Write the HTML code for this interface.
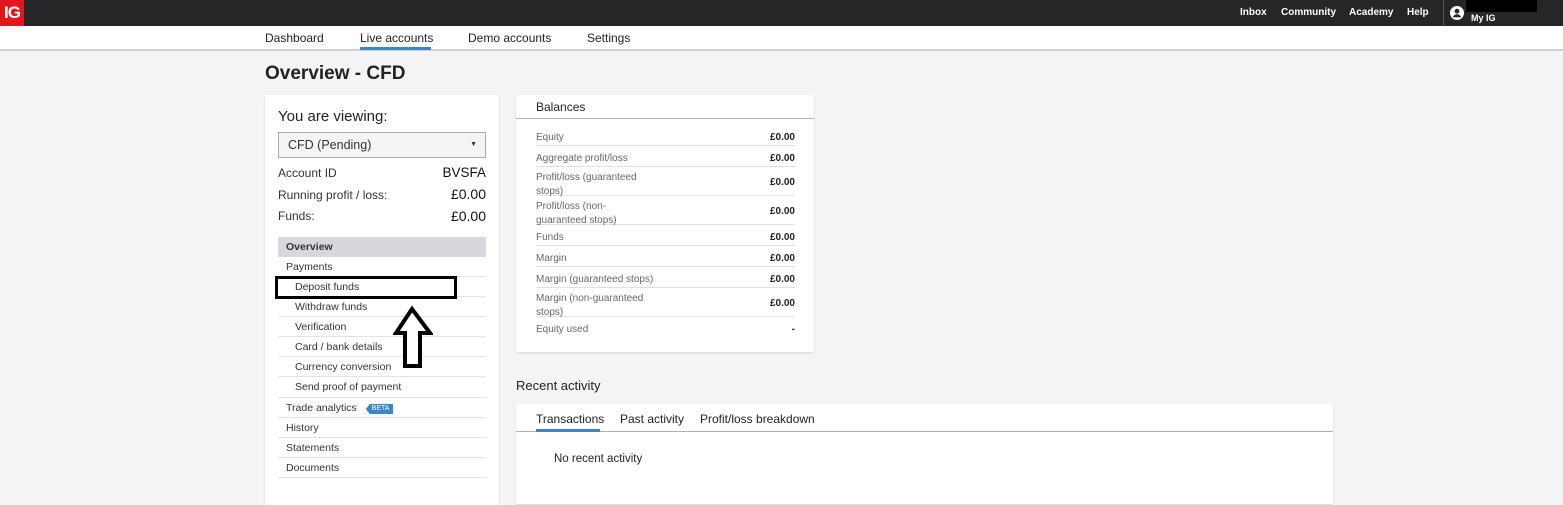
<!DOCTYPE html>
<html><head><style>
*{margin:0;padding:0;box-sizing:border-box}
body{width:1563px;height:493px;overflow:hidden;background:#f4f4f6;font-family:"Liberation Sans",sans-serif;color:#222;position:relative}
.a{position:absolute;white-space:nowrap}
.top{left:0;top:0;width:1563px;height:26px;background:#262628}
.logo{left:0;top:0;width:24px;height:26px;background:#e3161b;color:#fff;font-weight:bold;font-size:17px;line-height:26px;text-align:center;letter-spacing:-1px}
.tl{color:#fff;font-weight:bold;font-size:10px;top:7px}
.nav{left:0;top:26px;width:1563px;height:25px;background:#fff;border-bottom:2px solid #d0d0d6}
.ni{font-size:12px;top:31px;color:#222}
.card{background:#fff;box-shadow:0 1px 2px rgba(0,0,0,.12)}
.m{left:278px;width:208px;height:20px;border-bottom:1px solid #e2e2e6;font-size:10.5px;line-height:21px;color:#333}
.m.s{padding-left:17px}
.m:not(.s){padding-left:8px}
.b{left:536px;width:259px;border-bottom:1px solid #e0e0e4;font-size:10px;color:#666;padding-top:3px}
.b span{position:absolute;right:0;color:#222;font-weight:bold;top:3px}
</style></head><body>
<div class="a top"></div>
<div class="a logo">IG</div>
<div class="a tl" style="left:1240px">Inbox</div>
<div class="a tl" style="left:1281px">Community</div>
<div class="a tl" style="left:1349px">Academy</div>
<div class="a tl" style="left:1407px">Help</div>
<div class="a" style="left:1443px;top:0;width:1px;height:26px;background:#555"></div>
<svg class="a" style="left:1450px;top:6px" width="14" height="14" viewBox="0 0 14 14"><circle cx="7" cy="7" r="7" fill="#fff"/><circle cx="7" cy="5.2" r="2.4" fill="#262628"/><path d="M2.8 11.2c1-2.2 2.5-3 4.2-3s3.2.8 4.2 3z" fill="#262628"/></svg>
<div class="a" style="left:1466px;top:0;width:71px;height:12px;background:#000"></div>
<div class="a tl" style="left:1471px;top:13px;font-size:9px">My IG</div>

<div class="a nav"></div>
<div class="a ni" style="left:265px">Dashboard</div>
<div class="a ni" style="left:360px">Live accounts</div>
<div class="a" style="left:360px;top:47px;width:71px;height:3px;background:#3a86c8"></div>
<div class="a ni" style="left:468px">Demo accounts</div>
<div class="a ni" style="left:587px">Settings</div>

<div class="a" style="left:265px;top:63px;font-size:19px;font-weight:bold;color:#222">Overview - CFD</div>

<div class="a card" style="left:265px;top:95px;width:234px;height:410px"></div>
<div class="a" style="left:278px;top:108px;font-size:15px;color:#222">You are viewing:</div>
<div class="a" style="left:278px;top:132px;width:208px;height:26px;background:#f4f4f6;border:1px solid #a8a8ae;font-size:12.5px;line-height:24px;padding-left:9px;color:#333">CFD (Pending)<span style="position:absolute;right:8px;top:0;font-size:7px">▼</span></div>
<div class="a" style="left:278px;top:166px;font-size:12px;color:#333">Account ID</div>
<div class="a" style="right:1077px;top:165px;font-size:13.5px;color:#111">BVSFA</div>
<div class="a" style="left:278px;top:188px;font-size:12px;color:#333">Running profit / loss:</div>
<div class="a" style="right:1077px;top:186px;font-size:14px;color:#111">£0.00</div>
<div class="a" style="left:278px;top:209px;font-size:12px;color:#333">Funds:</div>
<div class="a" style="right:1077px;top:208px;font-size:14px;color:#111">£0.00</div>

<div class="a m" style="top:237px;background:#d8d8dc;font-weight:bold;border:0">Overview</div>
<div class="a m" style="top:257px">Payments</div>
<div class="a m s" style="top:277px">Deposit funds</div>
<div class="a m s" style="top:297px">Withdraw funds</div>
<div class="a m s" style="top:317px">Verification</div>
<div class="a m s" style="top:337px">Card / bank details</div>
<div class="a m s" style="top:357px">Currency conversion</div>
<div class="a m s" style="top:377px;height:21px">Send proof of payment</div>
<div class="a m" style="top:398px">Trade analytics <span style="display:inline-block;margin-left:6px;background:#3a86c8;color:#fff;font-size:7px;line-height:10px;padding:0 4px;vertical-align:1px;clip-path:polygon(4px 0,100% 0,100% 100%,4px 100%,0 50%)">&nbsp;BETA</span></div>
<div class="a m" style="top:418px">History</div>
<div class="a m" style="top:438px">Statements</div>
<div class="a m" style="top:458px">Documents</div>
<div class="a" style="left:275px;top:276px;width:182px;height:23px;border:3px solid #000"></div>
<svg class="a" style="left:393px;top:305px" width="40" height="63" viewBox="0 0 40 63"><path d="M19 4L3 28h9v33h15V28h10z" fill="#fff" stroke="#000" stroke-width="4" stroke-linejoin="miter"/></svg>

<div class="a card" style="left:516px;top:95px;width:298px;height:257px"></div>
<div class="a" style="left:536px;top:100px;font-size:12px;color:#222">Balances</div>
<div class="a" style="left:516px;top:118px;width:298px;height:1px;background:#b0b0b6"></div>
<div class="a b" style="top:129px;height:17px">Equity<span>£0.00</span></div>
<div class="a b" style="top:150px;height:17px">Aggregate profit/loss<span>£0.00</span></div>
<div class="a b" style="top:168px;height:28px;line-height:14px">Profit/loss (guaranteed<br>stops)<span style="top:8px">£0.00</span></div>
<div class="a b" style="top:197px;height:28px;line-height:14px">Profit/loss (non-<br>guaranteed stops)<span style="top:8px">£0.00</span></div>
<div class="a b" style="top:229px;height:17px">Funds<span>£0.00</span></div>
<div class="a b" style="top:250px;height:17px">Margin<span>£0.00</span></div>
<div class="a b" style="top:271px;height:17px">Margin (guaranteed stops)<span>£0.00</span></div>
<div class="a b" style="top:289px;height:28px;line-height:14px">Margin (non-guaranteed<br>stops)<span style="top:8px">£0.00</span></div>
<div class="a b" style="top:321px;height:17px;border:0">Equity used<span>-</span></div>

<div class="a" style="left:516px;top:378px;font-size:13px;color:#222">Recent activity</div>
<div class="a card" style="left:516px;top:404px;width:817px;height:100px"></div>
<div class="a" style="left:516px;top:431px;width:817px;height:1px;background:#b0b0b6"></div>
<div class="a" style="left:536px;top:412px;font-size:12px">Transactions</div>
<div class="a" style="left:536px;top:429px;width:64px;height:3px;background:#3a86c8"></div>
<div class="a" style="left:620px;top:412px;font-size:12px">Past activity</div>
<div class="a" style="left:700px;top:412px;font-size:12px">Profit/loss breakdown</div>
<div class="a" style="left:554px;top:453px;font-size:11.5px">No recent activity</div>
</body></html>
